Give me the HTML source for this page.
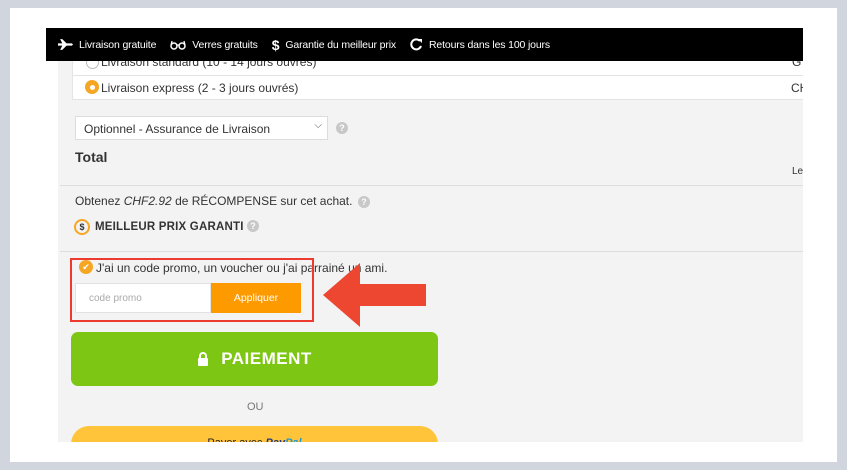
<!DOCTYPE html>
<html><head><meta charset="utf-8"><style>
*{margin:0;padding:0;box-sizing:border-box}
body{width:847px;height:470px;background:#d1d5dd;position:relative;overflow:hidden;font-family:"Liberation Sans",sans-serif}
.card{position:absolute;left:10px;top:8px;width:827px;height:454px;background:#fff}
.gray{position:absolute;left:58px;top:28px;width:745px;height:414px;background:#f3f3f3;overflow:hidden}
.bar{position:absolute;left:46px;top:28px;width:757px;height:33px;background:#000;color:#fff;font-size:10.5px;letter-spacing:-.15px;display:flex;align-items:center;padding-left:12px;white-space:nowrap}
.bar span{margin-right:14px;display:flex;align-items:center}
.bar svg{margin-right:6px}
.abs{position:absolute}
.t{font-size:12px;color:#333}
.q{position:absolute;width:12px;height:12px;border-radius:50%;background:#c8c8c8;color:#fff;font-size:9px;font-weight:bold;text-align:center;line-height:12px}
</style></head><body>
<div class="card"></div>
<div class="gray">
 <div class="abs" style="left:14px;top:20px;width:740px;height:52px;background:#fff;border:1px solid #e4e4e4"></div>
 <div class="abs" style="left:14px;top:47px;width:740px;height:1px;background:#e4e4e4"></div>
 <div class="abs" style="left:28px;top:28px;width:13px;height:13px;border:1px solid #bbb;border-radius:50%;background:#fff"></div>
 <div class="abs t" style="left:43px;top:27px">Livraison standard (10 - 14 jours ouvrés)</div>
 <div class="abs t" style="left:734px;top:27px">G</div>
 <div class="abs" style="left:27px;top:52px;width:14px;height:14px;border-radius:50%;background:#f5a623;display:flex;align-items:center;justify-content:center"><div style="width:5px;height:5px;border-radius:50%;background:#fff"></div></div>
 <div class="abs t" style="left:43px;top:53px">Livraison express (2 - 3 jours ouvrés)</div>
 <div class="abs t" style="left:733px;top:53px">CH</div>
 <div class="abs t" style="left:17px;top:88px;width:253px;height:24px;background:#fff;border:1px solid #ddd;padding:5px 0 0 8px">Optionnel - Assurance de Livraison<span style="position:absolute;right:5px;top:3px;font-size:10px;color:#555">⌵</span></div>
 <div class="q" style="left:278px;top:94px">?</div>
 <div class="abs" style="left:17px;top:121px;font-size:14px;font-weight:bold;color:#333">Total</div>
 <div class="abs" style="left:734px;top:138px;font-size:10px;color:#333">Le</div>
 <div class="abs" style="left:2px;top:157px;width:745px;height:1px;background:#ddd"></div>
 <div class="abs t" style="left:17px;top:166px">Obtenez <i>CHF2.92</i> de RÉCOMPENSE sur cet achat.</div>
 <div class="q" style="left:300px;top:168px">?</div>
 <div class="abs" style="left:16px;top:191px;width:16px;height:16px;border-radius:50%;border:2px solid #f5a623;font-size:9px;font-weight:bold;text-align:center;line-height:12px;color:#333">$</div>
 <div class="abs" style="left:37px;top:193px;font-size:11.5px;font-weight:bold;color:#333;letter-spacing:.2px">MEILLEUR PRIX GARANTI</div>
 <div class="q" style="left:189px;top:192px">?</div>
 <div class="abs" style="left:2px;top:223px;width:745px;height:1px;background:#ddd"></div>
 <div class="abs" style="left:21px;top:232px;width:14px;height:14px;border-radius:50%;background:#f5a623;color:#fff;font-size:9px;text-align:center;line-height:14px">✔</div>
 <div class="abs t" style="left:38px;top:233px">J'ai un code promo, un voucher ou j'ai parrainé un ami.</div>
 <div class="abs" style="left:17px;top:255px;width:136px;height:30px;background:#fff;border:1px solid #e2e2e2;font-size:10px;color:#aaa;padding:9px 0 0 13px">code promo</div>
 <div class="abs" style="left:153px;top:255px;width:90px;height:30px;background:#fd9a00;color:#fff;font-size:10.5px;text-align:center;line-height:30px">Appliquer</div>
 <div class="abs" style="left:12px;top:230px;width:244px;height:64px;border:2px solid #ec3b2e"></div>
 <svg class="abs" style="left:264px;top:234px" width="106" height="66"><polygon points="1,33 38,1 38,22 104,22 104,44 38,44 38,65" fill="#ed4731"/></svg>
 <div class="abs" style="left:13px;top:304px;width:367px;height:54px;background:#7ec614;border-radius:7px;color:#fff;font-size:17px;font-weight:bold;letter-spacing:.5px;display:flex;align-items:center;justify-content:center"><svg width="12" height="14" style="margin-right:12px"><rect x="1" y="6" width="10" height="8" rx="1" fill="#fff"/><path d="M3 6V4a3 3 0 0 1 6 0v2" stroke="#fff" stroke-width="2" fill="none"/></svg>PAIEMENT</div>
 <div class="abs" style="left:189px;top:373px;font-size:11px;color:#777">OU</div>
 <div class="abs" style="left:13px;top:398px;width:367px;height:40px;background:#ffc439;border-radius:18px;font-size:11px;color:#222;text-align:center;padding-top:11px">Payer avec <b style="color:#253b80;font-style:italic">Pay</b><b style="color:#179bd7;font-style:italic">Pal</b></div>
</div>
<div class="bar">
 <span><svg width="15" height="13" viewBox="0 0 14 12"><path d="M0 5h4L2 1h2l4 4h5l1 1-1 1H8l-4 4H2l2-4H0z" fill="#fff"/></svg>Livraison gratuite</span>
 <span><svg width="16" height="10"><circle cx="4" cy="6" r="3" stroke="#fff" fill="none" stroke-width="1.5"/><circle cx="12" cy="6" r="3" stroke="#fff" fill="none" stroke-width="1.5"/><path d="M7 5h2M1 5L2 1M15 5L14 1" stroke="#fff" stroke-width="1.3"/></svg>Verres gratuits</span>
 <span><b style="font-size:14px;margin-right:6px">$</b>Garantie du meilleur prix</span>
 <span><svg width="13" height="13" viewBox="0 0 13 13"><path d="M10 3A5 5 0 1 0 11 8" stroke="#fff" stroke-width="2" fill="none"/><path d="M8 1h4v4z" fill="#fff"/></svg>Retours dans les 100 jours</span>
</div>
</body></html>
